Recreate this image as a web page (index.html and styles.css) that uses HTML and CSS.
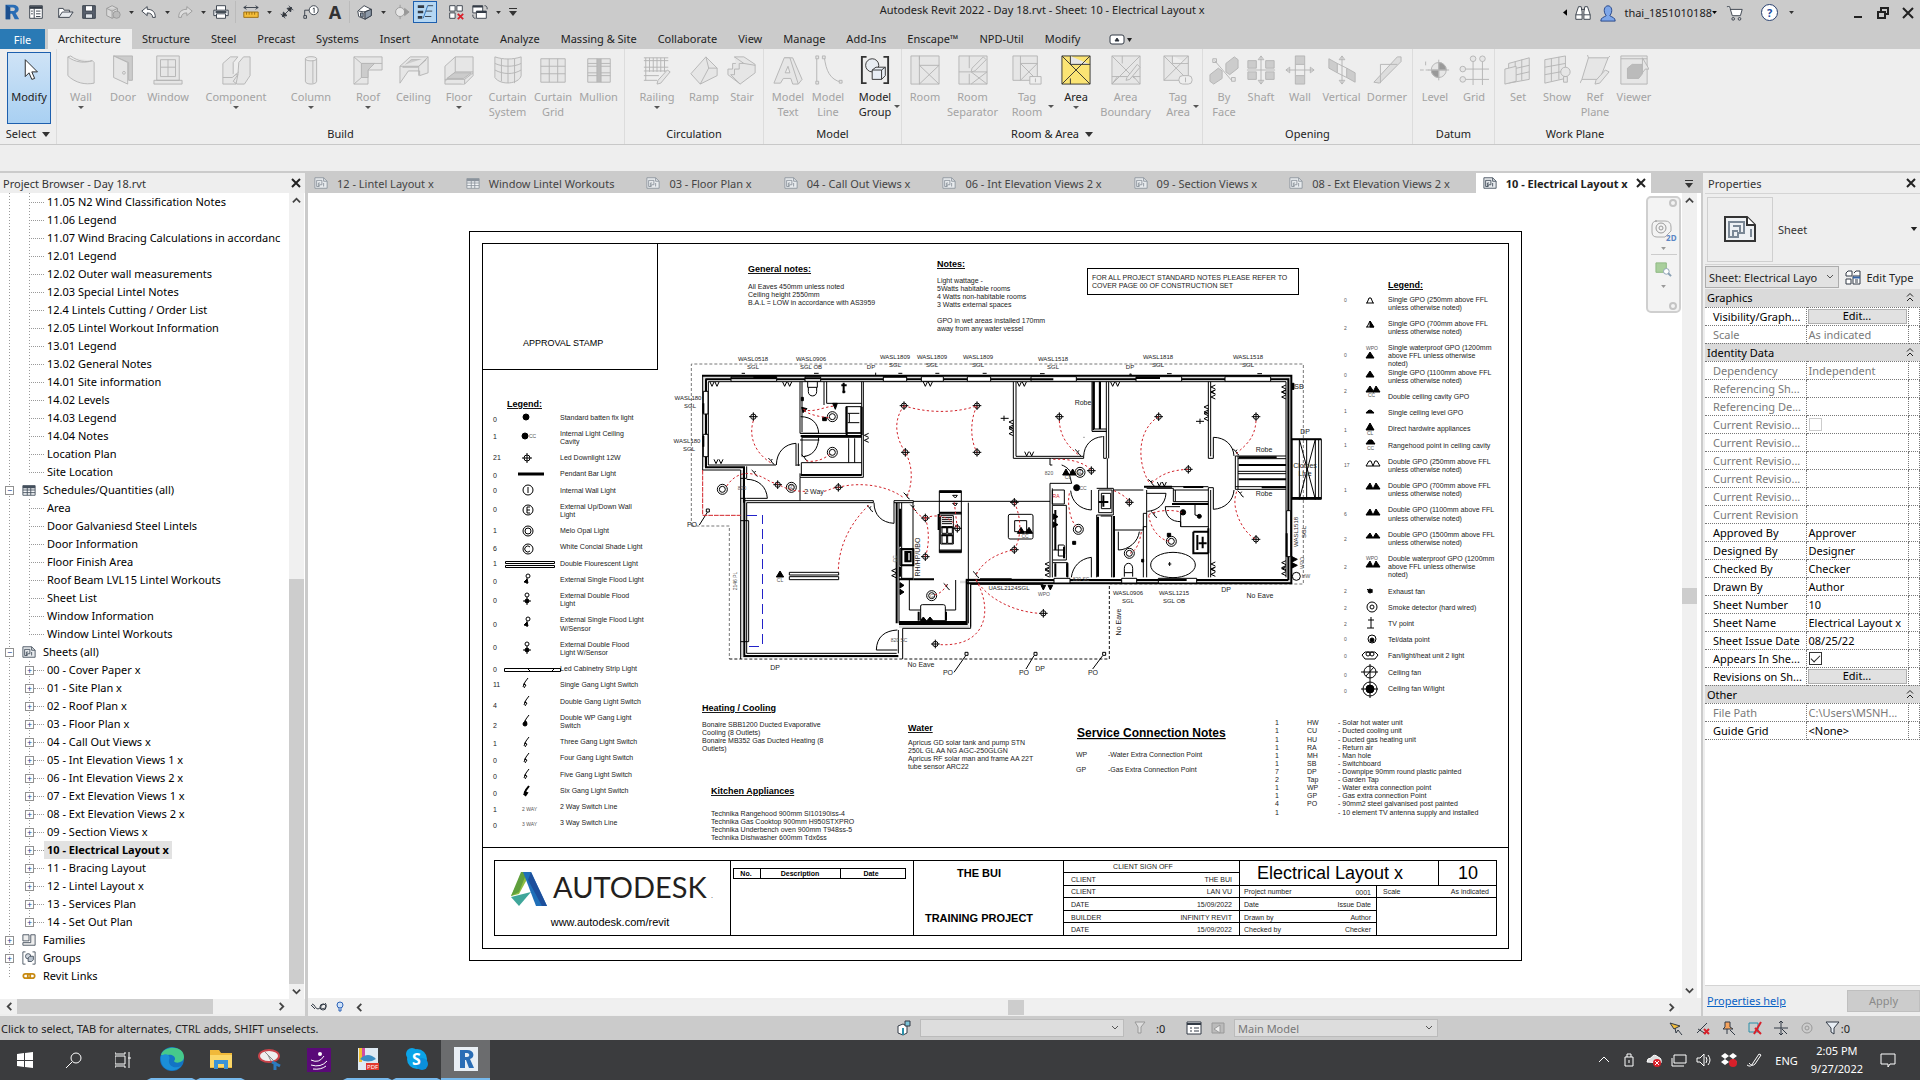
FILE: index.html
```html
<!DOCTYPE html>
<html lang="en">
<head>
    <meta charset="utf-8">
    <title>Autodesk Revit 2022 - Day 18.rvt - Sheet: 10 - Electrical Layout x</title>
    <link rel="stylesheet" href="styles.css">
</head>
<body>
    <svg class="defs" width="0" height="0" aria-hidden="true">
        <symbol id="i-sheet" viewBox="0 0 16 16"><path d="M1 2h10l4 4v8H1z" fill="#e8ebee"/><path d="M11 2v4h4" /><path d="M3 12V5h6v5H6v2zM5 12V8h2M11 8v4"/></symbol>
        <symbol id="i-table" viewBox="0 0 16 16"><path d="M1 3h14v11H1z" fill="#f4f6f8"/><path d="M1 4.500h14" stroke-width="3"/><path d="M1 8h14M1 11h14M6 5v9M10 5v9"/></symbol>
        <symbol id="i-caret" viewBox="0 0 8 5"><path d="M0 0h8L4 5z"/></symbol>
        <symbol id="i-close" viewBox="0 0 10 10"><path d="M1 1l8 8M9 1l-8 8"/></symbol>
        <symbol id="i-up" viewBox="0 0 10 10"><path d="M1 7l4-4 4 4"/></symbol>
        <symbol id="i-down" viewBox="0 0 10 10"><path d="M1 3l4 4 4-4"/></symbol>
        <symbol id="i-left" viewBox="0 0 10 10"><path d="M7 1L3 5l4 4"/></symbol>
        <symbol id="i-right" viewBox="0 0 10 10"><path d="M3 1l4 4-4 4"/></symbol>
        <symbol id="i-fold" viewBox="0 0 8 10"><path d="M1 4.500l3-3 3 3M1 9l3-3 3 3"/></symbol>
    </svg>

    <header class="titlebar">
        <div class="qat">
            <button class="qbtn" aria-label="Revit"><svg viewBox="0 0 20 20"><path d="M3 2h8c8 0 8 8 3 9l4 7h-5l-3-6H8v6H3zM8 5v4h3c3 0 3-4 0-4z" fill="#2a6db5" fill-rule="evenodd"/><path d="M3 2l5 3v13H3z" fill="#1b4f8f"/></svg></button>
            <button class="qbtn" aria-label="Home"><svg class="line" viewBox="0 0 20 20"><path d="M3 3h14v14H3z" fill="#fff"/><path d="M3 5h14" stroke-width="3"/><path d="M8 6v11M10 9h5M10 12h5M10 15h5M4.500 9h2M4.500 12h2"/></svg></button>
            <span class="gap5"></span>
            <button class="qbtn" aria-label="Open"><svg class="line" viewBox="0 0 20 20"><path d="M3 16V6h5l1 2h6v2" fill="#fff"/><path d="M3 16l4-6h12l-4 6z" fill="#e7eaee"/></svg></button>
            <button class="qbtn" aria-label="Save"><svg class="line" viewBox="0 0 20 20"><path d="M3 3h14v14H3z" fill="#59616e"/><path d="M6 3h8v6H6z" fill="#fff"/><path d="M6 12h8v5H6z" fill="#dfe3e8"/></svg></button>
            <button class="qbtn" aria-label="Sync"><svg class="line soft" viewBox="0 0 20 20"><path d="M3 6l6-3 6 3v8l-6 3-6-3zM3 6l6 3 6-3M9 9v8" fill="#d9d9d9"/><circle cx="14" cy="13" r="4" fill="#bbb"/></svg></button>
            <button class="qarr" aria-label="Sync options"><svg><use href="#i-caret"/></svg></button>
            <button class="qbtn" aria-label="Undo"><svg class="line" viewBox="0 0 20 20"><path d="M2 9l6-5v3c6 0 9 3 9 9h-3c0-3-2-5-6-5v3z" fill="#fff"/></svg></button>
            <button class="qarr" aria-label="Undo list"><svg><use href="#i-caret"/></svg></button>
            <button class="qbtn" aria-label="Redo"><svg class="line soft" viewBox="0 0 20 20"><path d="M18 9l-6-5v3c-6 0-9 3-9 9h3c0-3 2-5 6-5v3z" fill="#ddd"/></svg></button>
            <button class="qarr" aria-label="Redo list"><svg><use href="#i-caret"/></svg></button>
            <button class="qbtn" aria-label="Print"><svg class="line" viewBox="0 0 20 20"><path d="M5 8V3h10v5" fill="#fff"/><path d="M2 8h16v6H2z" fill="#eceff2"/><path d="M5 12h10v5H5z" fill="#fff"/><path d="M4 10h12" stroke-width="2"/></svg></button>
            <span class="qsep"></span>
            <button class="qbtn" aria-label="Measure"><svg class="line" viewBox="0 0 20 20"><path d="M2 5h16M2 5l3-2M2 5l3 2M18 5l-3-2M18 5l-3 2"/><path d="M2 10h16v6H2z" fill="#f3bd3a" stroke="#9a6b10"/><path d="M5 10v3M8 10v3M11 10v3M14 10v3" stroke="#9a6b10"/></svg></button>
            <button class="qarr" aria-label="Measure options"><svg><use href="#i-caret"/></svg></button>
            <button class="qbtn" aria-label="Aligned dimension"><svg class="line" viewBox="0 0 20 20"><path d="M5 15L15 5M3 12l5 5M12 3l5 5"/><path d="M5 15l1-5 4 4zM15 5l-1 5-4-4z" fill="#333"/></svg></button>
            <button class="qbtn" aria-label="Tag by category"><svg class="line" viewBox="0 0 20 20"><path d="M2 17h3v-3H2zM3 14v-6h5"/><circle cx="13" cy="8" r="5" fill="#fff"/><path d="M12 6.500l1.500-1V11"/></svg></button>
            <button class="qbtn qtext" aria-label="Text">A</button>
            <span class="qsep"></span>
            <button class="qbtn" aria-label="Default 3D view"><svg class="line" viewBox="0 0 20 20"><path d="M2 9l7-6 8 4v7l-7 4-7-3z" fill="#fff"/><path d="M9 10l8-3M10 10v8M3 9l7 1" /><path d="M5 11h3v5l-3-1zM10 10l7-3v7l-7 4z" fill="#8d9aa9"/></svg></button>
            <button class="qarr" aria-label="3D options"><svg><use href="#i-caret"/></svg></button>
            <button class="qbtn" aria-label="Section"><svg class="line soft" viewBox="0 0 20 20"><circle cx="9" cy="10" r="5" fill="#e6e6e6"/><path d="M9 2v3M9 15v3"/><path d="M14 6l5 4-5 4z" fill="#999"/></svg></button>
            <button class="qbtn qon" aria-label="Thin lines"><svg class="line" viewBox="0 0 20 20"><path d="M2 4h7M2 10h6M2 16h5" stroke-width="3"/><path d="M13 3h6M11 9h7M10 15h7"/><path d="M13 3L8 17" stroke="#2a6db5"/></svg></button>
            <span class="gap7"></span>
            <button class="qbtn" aria-label="Close inactive views"><svg class="line" viewBox="0 0 20 20"><path d="M3 3h6v6H3zM11 3h6v6h-6zM3 11h6v6H3z" fill="#fff"/><path d="M12 12l6 6M18 12l-6 6" stroke="#d8202a" stroke-width="2"/></svg></button>
            <button class="qbtn" aria-label="Switch windows"><svg class="line" viewBox="0 0 20 20"><path d="M2 3h11v8H2z" fill="#fff"/><path d="M6 9h11v8H6z" fill="#fff"/><path d="M2 4h11M6 10h11" stroke-width="2"/><path d="M15 3c2 0 3 1 3 4M2 13c0 3 1 4 3 4"/></svg></button>
            <button class="qarr" aria-label="Window list"><svg><use href="#i-caret"/></svg></button>
            <button class="qarr more" aria-label="Customize toolbar"><svg><use href="#i-caret"/></svg></button>
        </div>
        <h1 class="title">Autodesk Revit 2022 - Day 18.rvt - Sheet: 10 - Electrical Layout x</h1>
        <div class="account">
            <svg class="tri" viewBox="0 0 5 8"><path d="M5 0v8L0 4z"/></svg>
            <svg class="line a16" viewBox="0 0 20 20"><path d="M3 9l2-6h3l1 6v8H2v-5zM17 9l-2-6h-3l-1 6v8h7v-5z" fill="#fff"/><path d="M2 12h7M11 12h7M8 6h4"/></svg>
            <svg class="a16" viewBox="0 0 20 20"><path d="M2 19c0-4 3-4 6-6-4-5-2-11 2-11s6 6 2 11c3 2 6 2 6 6z" fill="#7ea6e8" stroke="#1f3f84"/></svg>
            <button class="user">thai_1851010188<svg><use href="#i-caret"/></svg></button>
            <svg class="line a16 cart" viewBox="0 0 20 20"><path d="M1 3h3l3 10h9l2-7H5" fill="#fff"/><circle cx="8" cy="16.500" r="1.500"/><circle cx="15" cy="16.500" r="1.500"/></svg>
            <button class="help" aria-label="Help">?</button>
            <button class="qarr" aria-label="Help menu"><svg><use href="#i-caret"/></svg></button>
            <div class="winbtns">
                <button aria-label="Minimize"><svg class="win" viewBox="0 0 12 12"><path d="M2 10h8"/></svg></button>
                <button aria-label="Restore"><svg class="win" viewBox="0 0 12 12"><path d="M1 5h7v6H1zM4 4V1h7v6H9"/></svg></button>
                <button aria-label="Close"><svg class="win" viewBox="0 0 12 12"><path d="M1 1l10 10M11 1L1 11"/></svg></button>
            </div>
        </div>
    </header>

    <nav class="tabs">
        <button class="file">File</button>
        <button class="tab active">Architecture</button>
        <button class="tab">Structure</button>
        <button class="tab">Steel</button>
        <button class="tab">Precast</button>
        <button class="tab">Systems</button>
        <button class="tab">Insert</button>
        <button class="tab">Annotate</button>
        <button class="tab">Analyze</button>
        <button class="tab">Massing &amp; Site</button>
        <button class="tab">Collaborate</button>
        <button class="tab">View</button>
        <button class="tab">Manage</button>
        <button class="tab">Add-Ins</button>
        <button class="tab">Enscape™</button>
        <button class="tab">NPD-Util</button>
        <button class="tab">Modify</button>
        <button class="tab collapse" aria-label="Minimize ribbon"><svg class="line" viewBox="0 0 24 12"><rect x="1" y="2" width="14" height="9" rx="2" fill="#fff"/><path d="M6 8l2-3 2 3z" fill="#222"/><path d="M18 5h5l-2.500 4z" fill="#222" stroke="none"/></svg></button>
    </nav>

    <div class="ribbon">
        <section class="panel p-select">
            <div class="tools">
                <button class="tool on"><svg viewBox="0 0 32 32"><path d="M12 5v18l4-4 3 7 3-1-3-7h6z" fill="#fff" stroke="#222"/></svg>Modify</button>
            </div>
            <h2>Select <svg><use href="#i-caret"/></svg></h2>
        </section>
        <section class="panel p-build">
            <div class="tools">
                <button class="tool"><svg viewBox="0 0 32 32"><path d="M2 2c8 6 18 7 26 4l2 2v22c-9 2-20 0-28-8zM2 2l3-1c8 6 16 7 23 5"/></svg>Wall<i></i></button>
                <button class="tool"><svg viewBox="0 0 32 32"><path d="M6 1h20v26h-4V8L6 1z" fill="#ccc"/><path d="M6 1l15 7v23L6 24z"/><circle cx="17" cy="19" r="1.500"/></svg>Door</button>
                <button class="tool"><svg viewBox="0 0 32 32"><path d="M4 1h24v26H4zM8 5h16v18H8zM16 5v18M8 13h16M1 27h30v4H1z"/></svg>Window</button>
                <button class="tool"><svg viewBox="0 0 32 32"><path d="M2 9l8-7h8l-5 6v13h5l-2 10H2zM19 8l5-6h7v20l-6 9h-8l-4-3 5-7z"/><path d="M2 24h10l7-6"/></svg>Component<i></i></button>
                <button class="tool"><svg viewBox="0 0 32 32"><path d="M10 4c0-3 12-3 12 0v24c0 4-12 4-12 0zM10 4c0 3 12 3 12 0M18 6v24"/></svg>Column<i></i></button>
                <button class="tool"><svg viewBox="0 0 32 32"><path d="M1 2h30v14H16v15H1z"/><path d="M1 2l8 7h22M9 9v15l-8 7M9 24l7-8"/><path d="M9 9h14l-7 7v8l-7 0z" fill="#ccc"/></svg>Roof<i></i></button>
                <button class="tool"><svg viewBox="0 0 32 32"><path d="M1 12L12 2h19v17l-9 3v-5H10L1 30z"/><path d="M4 13L13 5h16L20 13z" fill="#ccc"/><path d="M1 12h20l10-10M21 12v10"/></svg>Ceiling</button>
                <button class="tool"><svg viewBox="0 0 32 32"><path d="M1 12L12 2h19v20l-9 9H1z"/><path d="M12 2v16L1 28M12 18h19"/><path d="M3 25l8-6h18l-8 6z" fill="#ccc"/><path d="M1 26h21v5M22 26l9-7"/></svg>Floor<i></i></button>
                <button class="tool"><svg viewBox="0 0 32 32"><path d="M2 2c9 3 19 3 28 0v20c-2 9-22 11-28 2z"/><path d="M2 9c9 4 20 4 28 0M2 16c9 5 20 5 28 0M9 4v24M16 4v26M23 4v26"/></svg>Curtain System</button>
                <button class="tool"><svg viewBox="0 0 32 32"><path d="M3 4h26v25H3zM12 4v25M21 4v25M3 12h26M3 20h26"/></svg>Curtain Grid</button>
                <button class="tool"><svg viewBox="0 0 32 32"><path d="M4 4h10v25H4zM18 4h10v25H18z"/><path d="M14 4h4v25h-4z" fill="#bbb"/><path d="M4 9h10M4 12h10M4 19h10M4 22h10M18 9h10M18 12h10M18 19h10M18 22h10"/></svg>Mullion</button>
            </div>
            <h2>Build</h2>
        </section>
        <section class="panel p-circ">
            <div class="tools">
                <button class="tool"><svg viewBox="0 0 32 32"><path d="M2 3h26M2 6h26M2 13h26M2 17h24M2 22h16M2 27h14M4 3v24M8 3v15M12 3v15M16 3v15M20 3v15M24 3v15"/><path d="M17 27L27 16l3 2-10 12-4 1z"/></svg>Railing<i></i></button>
                <button class="tool"><svg viewBox="0 0 32 32"><path d="M2 20L18 2l12 12v8L12 31z"/><path d="M18 2l3 12-9 17M21 14h9"/></svg>Ramp</button>
                <button class="tool"><svg viewBox="0 0 32 32"><path d="M8 2h10l12 8v9L14 31 1 21v-6h5V9h6z"/><path d="M8 2l10 7h-5v6H8v6H4l10 10M18 9l12 2"/></svg>Stair</button>
            </div>
            <h2>Circulation</h2>
        </section>
        <section class="panel p-model">
            <div class="tools">
                <button class="tool"><svg viewBox="0 0 32 32"><path d="M1 30L12 3h9l10 23-4 5h-6l-2-6h-8l-3 5zM13 19h5l-2-7z" fill-rule="evenodd"/><path d="M12 3h6l9 28"/></svg>Model Text</button>
                <button class="tool"><svg viewBox="0 0 32 32"><path d="M4 3v27M12 2c2 15 6 24 18 27" fill="none"/><path d="M3 1h3v3H3zM3 28h3v3H3zM10 1h3v3h-3zM28 27h3v3h-3z"/></svg>Model Line</button>
                <button class="tool live"><svg viewBox="0 0 32 32"><path d="M7 2H2v28h5M25 2h5v28h-5" fill="none" stroke-width="2"/><circle cx="13" cy="11" r="7" fill="#e9edf2"/><path d="M13 16l4-3h10v9l-4 4H13zM13 16h10v10M23 16l4-3" fill="#e9eef5"/></svg>Model Group<i class="side"></i></button>
            </div>
            <h2>Model</h2>
        </section>
        <section class="panel p-room">
            <div class="tools">
                <button class="tool"><svg viewBox="0 0 32 32"><path d="M1 1h30v30H1zM10 1v30M10 11h21M10 11l21 20M31 11L10 31M10 1v4"/></svg>Room</button>
                <button class="tool"><svg viewBox="0 0 32 32"><path d="M1 1h30v30H1zM12 1v13M1 18h30M14 18l17 13M31 18L14 31M12 20v11"/><path d="M15 14L27 2l3 3-12 12-4 1z"/></svg>Room Separator</button>
                <button class="tool"><svg viewBox="0 0 32 32"><path d="M1 1h26v26H1zM9 1v26M9 9h18M9 9l18 18M27 9L9 27"/><path d="M19 23h12v8H19z" fill="#eee"/><path d="M25 25v4"/></svg><span>Tag<br>Room</span><i class="side"></i></button>
                <button class="tool live"><svg viewBox="0 0 32 32"><path d="M1 1h30v30H1z" fill="#fbe474"/><path d="M10 1v9h21M1 1l30 30M31 1L1 31M10 25v6"/></svg>Area<i></i></button>
                <button class="tool"><svg viewBox="0 0 32 32"><path d="M1 1h30v30H1zM1 1l24 24M31 1L1 31M12 1v8M1 23h30M1 31l6-8M24 23l7 8"/><path d="M17 24L28 10l3 3-11 13-4 1z"/></svg>Area Boundary</button>
                <button class="tool"><svg viewBox="0 0 32 32"><path d="M1 1h26v26H1zM1 1l26 26M27 1L1 27M10 1v8h17"/><rect x="17" y="22" width="14" height="9" rx="4" fill="#eee"/><path d="M24 24v5"/></svg><span>Tag<br>Area</span><i class="side"></i></button>
            </div>
            <h2>Room &amp; Area <svg><use href="#i-caret"/></svg></h2>
        </section>
        <section class="panel p-open">
            <div class="tools">
                <button class="tool"><svg viewBox="0 0 32 32"><path d="M18 9l9-7 4 3v9l-9 7-4-3zM1 21l9-7 4 3v8l-9 6-4-3z" fill="#ccc"/><path d="M6 6l18 21M4 4h4v4H4zM24 24h4v4h-4z"/></svg><span>By<br>Face</span></button>
                <button class="tool"><svg viewBox="0 0 32 32"><path d="M2 6h9v8H2zM21 6h9v8h-9zM2 18h9v8H2zM21 18h9v8h-9z" fill="#ccc"/><path d="M16 1v30M16 1l-3 4h6zM16 31l-3-4h6zM1 16h30"/></svg>Shaft</button>
                <button class="tool"><svg viewBox="0 0 32 32"><path d="M11 1h10v9H11zM11 22h10v9H11z" fill="#ccc"/><path d="M1 16h30M1 16l4-3v6zM31 16l-4-3v6zM11 10v12M21 10v12"/></svg>Wall</button>
                <button class="tool"><svg viewBox="0 0 32 32"><path d="M2 4l9 5v10l-9-5zM21 14l9 5v10l-9-5z" fill="#ccc"/><path d="M16 1v30M16 1l-3 4h6zM16 31l-3-4h6zM11 9l10 5M11 19l10 5"/></svg>Vertical</button>
                <button class="tool"><svg viewBox="0 0 32 32"><path d="M2 29L27 2h4v5L8 30z" fill="#ddd"/><path d="M9 30V10h18" fill="none"/></svg>Dormer</button>
            </div>
            <h2>Opening</h2>
        </section>
        <section class="panel p-datum">
            <div class="tools">
                <button class="tool"><svg viewBox="0 0 32 32"><path d="M0 16h10M6 7v6" stroke-dasharray="4 2"/><circle cx="20" cy="16" r="8"/><path d="M20 8a8 8 0 0 1 8 8h-8zM20 24a8 8 0 0 1-8-8h8z" fill="#999"/><path d="M20 5v22M9 16h22"/></svg>Level</button>
                <button class="tool"><svg viewBox="0 0 32 32"><path d="M15 6v26M25 6v26M6 15h26M6 26h26"/><circle cx="15" cy="4" r="3"/><circle cx="25" cy="4" r="3"/><circle cx="4" cy="15" r="3"/><circle cx="4" cy="26" r="3"/></svg>Grid</button>
            </div>
            <h2>Datum</h2>
        </section>
        <section class="panel p-work">
            <div class="tools">
                <button class="tool"><svg viewBox="0 0 32 32"><path d="M6 9l22-6v23L6 30zM6 16l22-5M6 23l22-5M13 7v22M20 5v22"/><path d="M2 15l12-3v16l-12 3z"/></svg>Set</button>
                <button class="tool"><svg viewBox="0 0 32 32"><path d="M3 5l22-4v24L3 30zM3 13l22-4M3 21l22-4M10 4v24M18 2v24"/><circle cx="25" cy="18" r="5"/><path d="M23 23h4v6h-4z"/></svg>Show</button>
                <button class="tool"><svg viewBox="0 0 32 32"><path d="M9 3h21l-9 23H2zM9 3L8 0M30 3l2-2M2 26l-2 4"/><path d="M17 27l10-11 4 2-10 12-5 1z"/></svg><span>Ref<br>Plane</span></button>
                <button class="tool"><svg viewBox="0 0 32 32"><path d="M2 1h28v30H2zM2 4h28"/><path d="M9 14l5-4h11v10l-4 5H9z" fill="#bbb"/><path d="M25 3v16l3-4h4z"/></svg>Viewer</button>
            </div>
            <h2>Work Plane</h2>
        </section>
    </div>
    <div class="options"></div>

    <main class="work">
        <aside class="browser">
            <header class="phead">Project Browser - Day 18.rvt<button aria-label="Close browser"><svg class="x"><use href="#i-close"/></svg></button></header>
            <div class="bbody">
                <ul class="tree">
                    <li>
                        <ul class="leaves">
                            <li>11.05 N2 Wind Classification Notes</li>
                            <li>11.06 Legend</li>
                            <li>11.07 Wind Bracing Calculations in accordanc</li>
                            <li>12.01 Legend</li>
                            <li>12.02 Outer wall measurements</li>
                            <li>12.03 Special Lintel Notes</li>
                            <li>12.4 Lintels Cutting / Order List</li>
                            <li>12.05 Lintel Workout Information</li>
                            <li>13.01 Legend</li>
                            <li>13.02 General Notes</li>
                            <li>14.01 Site information</li>
                            <li>14.02 Levels</li>
                            <li>14.03 Legend</li>
                            <li>14.04 Notes</li>
                            <li>Location Plan</li>
                            <li>Site Location</li>
                        </ul>
                    </li>
                    <li>
                        <div class="root"><button class="exp">−</button><svg class="ti"><use href="#i-table"/></svg>Schedules/Quantities (all)</div>
                        <ul class="leaves">
                            <li>Area</li>
                            <li>Door Galvaniesd Steel Lintels</li>
                            <li>Door Information</li>
                            <li>Floor Finish Area</li>
                            <li>Roof Beam LVL15 Lintel Workouts</li>
                            <li>Sheet List</li>
                            <li>Window Information</li>
                            <li>Window Lintel Workouts</li>
                        </ul>
                    </li>
                    <li>
                        <div class="root"><button class="exp">−</button><svg class="ti"><use href="#i-sheet"/></svg>Sheets (all)</div>
                        <ul class="leaves sheets">
                            <li><button class="exp">+</button>00 - Cover Paper x</li>
                            <li><button class="exp">+</button>01 - Site Plan x</li>
                            <li><button class="exp">+</button>02 - Roof Plan x</li>
                            <li><button class="exp">+</button>03 - Floor Plan x</li>
                            <li><button class="exp">+</button>04 - Call Out Views x</li>
                            <li><button class="exp">+</button>05 - Int Elevation Views 1 x</li>
                            <li><button class="exp">+</button>06 - Int Elevation Views 2 x</li>
                            <li><button class="exp">+</button>07 - Ext Elevation Views 1 x</li>
                            <li><button class="exp">+</button>08 - Ext Elevation Views 2 x</li>
                            <li><button class="exp">+</button>09 - Section Views x</li>
                            <li><button class="exp">+</button><b>10 - Electrical Layout x</b></li>
                            <li><button class="exp">+</button>11 - Bracing Layout</li>
                            <li><button class="exp">+</button>12 - Lintel Layout x</li>
                            <li><button class="exp">+</button>13 - Services Plan</li>
                            <li><button class="exp">+</button>14 - Set Out Plan</li>
                        </ul>
                    </li>
                    <li><div class="root"><button class="exp">+</button><svg class="ti" viewBox="0 0 16 16"><path d="M1 2h7v7H1zM10 2h5v12H1v-3h9z" fill="#eee"/></svg>Families</div></li>
                    <li><div class="root"><button class="exp">+</button><svg class="ti" viewBox="0 0 16 16"><path d="M4 1H1v14h3M12 1h3v14h-3"/><circle cx="7" cy="6" r="3" fill="#cfd6de"/><path d="M7 8l2-2h4v4l-2 2H7z" fill="#b8c2cd"/></svg>Groups</div></li>
                    <li><div class="root"><span class="noexp"></span><svg class="ti" viewBox="0 0 16 16"><path d="M4 5.500h3a2.500 2.500 0 0 1 0 5H4a2.500 2.500 0 0 1 0-5zM9 5.500h3a2.500 2.500 0 0 1 0 5H9a2.500 2.500 0 0 1 0-5z" fill="none" stroke="#c88a12" stroke-width="2"/></svg>Revit Links</div></li>
                </ul>
                <div class="vbar">
                    <button aria-label="Scroll up"><svg class="ar"><use href="#i-up"/></svg></button>
                    <span class="vthumb b"></span>
                    <button aria-label="Scroll down"><svg class="ar"><use href="#i-down"/></svg></button>
                </div>
            </div>
            <div class="hbar">
                <button aria-label="Scroll left"><svg class="ar"><use href="#i-left"/></svg></button>
                <span class="hthumb b"></span>
                <button aria-label="Scroll right"><svg class="ar"><use href="#i-right"/></svg></button>
            </div>
        </aside>

        <section class="view">
            <div class="vtabs">
                <button class="vtab"><svg><use href="#i-sheet"/></svg>12 - Lintel Layout x</button>
                <button class="vtab"><svg><use href="#i-table"/></svg>Window Lintel Workouts</button>
                <button class="vtab"><svg><use href="#i-sheet"/></svg>03 - Floor Plan x</button>
                <button class="vtab"><svg><use href="#i-sheet"/></svg>04 - Call Out Views x</button>
                <button class="vtab"><svg><use href="#i-sheet"/></svg>06 - Int Elevation Views 2 x</button>
                <button class="vtab"><svg><use href="#i-sheet"/></svg>09 - Section Views x</button>
                <button class="vtab"><svg><use href="#i-sheet"/></svg>08 - Ext Elevation Views 2 x</button>
                <button class="vtab current"><svg><use href="#i-sheet"/></svg>10 - Electrical Layout x<svg class="x"><use href="#i-close"/></svg></button>
                <button class="vmenu more" aria-label="Tab list"><svg><use href="#i-caret"/></svg></button>
            </div>
            <div class="vbody">
                <div class="canvas">
                    <svg class="sheet" viewBox="308 193 1374 805">
                        <defs>
                            <g id="dl"><circle r="8"/><path d="M-13 0H13M0-13V13"/></g>
                            <g id="cl"><circle r="15"/><circle r="9"/></g>
                            <g id="gh"><path d="M0 0l6 13 6-13M15 0l6 13 6-13"/></g>
                            <g id="gv"><path d="M0 0l-13 6 13 6M0 15l-13 6 13 6"/></g>
                            <g id="sw"><path d="M0 0l-5-8 4-5M-5-8l-8-8M0 0l5 3"/></g>
                            <g id="l-sw"><path d="M3-5l-3 4-2 5M-2 1l3 1-2 3"/></g>
                            <g id="l-fl"><circle cx="1" cy="-3" r="2"/><path d="M-3 3l3-3 1 4z" fill="#000"/><path d="M0-1v6"/></g>
                            <g id="l-fd"><circle cy="-4" r="2"/><circle cy="2" r="2" fill="#000"/><path d="M-4 2h8M0-2v8"/></g>
                        </defs>

                        <!-- frame and title block lines -->
                        <g class="ln">
                            <path d="M469.500 231.500h1052v729h-1052zM482.500 243.500h1026v705h-1026zM482.500 369.500h175v-126M482.500 847.500h1026"/>
                            <path d="M494.500 860.500h1002v75h-1002zM730.500 860.500v75M913.500 860.500v75M1063.500 860.500v75M1239.500 860.500v75"/>
                            <path d="M733.500 868.500h172v10h-172zM760.500 868.500v10M840.500 868.500v10"/>
                            <path d="M1063.500 872.500h176M1063.500 885.500h433M1063.500 897.500h433M1063.500 910.500h313M1063.500 922.500h313M1376.500 885.500v50M1438.500 860.500v25"/>
                            <path d="M1087.500 268.500h211v26h-211z"/>
                        </g>

                        <!-- floor plan, drawn at three units to a pixel -->
                        <svg x="680" y="350" width="660" height="330" viewBox="0 0 1980 990" class="plan">
                            <path class="eave" d="M34 528V42H1870V702H1290M34 528H148V927"/>
                            <path class="eave dark" d="M148 927H1288V702"/>
                            <path class="hatch" d="M68 82H1834M1828 82V696M1834 696H840M72 82V352M187 360V922M190 921H655M657 830H868"/>
                            <g class="w">
                                <path class="k" d="M66 77H1834V700H858M76 88H1825V690M78 88V352H192V458"/>
                                <path d="M68 77V360H182V927M85 95H1818V682M85 95V345H288M349 345H360"/>
                                <path class="k" d="M193 445V918H655M650 458V820M657 822H858"/>
                                <path d="M200 458V910H650M200 349V385M182 385H200M182 445H200M190 452H580V458H200M642 452H700V458H642M642 452V520M657 458V820H857M655 910V840M668 927V835H872V703H1090"/>
                                <path class="k" d="M858 690H1825M657 688H700M860 690V825"/>
                                <path d="M865 458V688M857 688H1090M700 454H1110M865 690V820M872 703V830"/>
                                <path d="M182 512H206V875H182M193 512V875"/>
                                <path d="M360 95V250M366 95V246M360 250H545M545 95V375H364V338H545M550 95V382H360V370M360 382V452M365 262H545M506 265V338M524 265V338"/>
                                <path class="k" d="M362 258H545M362 375H545M545 170V255M500 170V255"/>
                                <path d="M432 95V165M440 95V160H545M498 170H543V248H498zM503 190H538M503 218H538M508 190V218"/>
                                <path d="M383 95V112H412V95M385 112V125C385 142 410 142 410 125V112"/>
                                <path class="k" d="M491 98V130M484 106H500M487 125H496"/>
                                <path d="M360 270H418M348 280V348M355 280V348M289 345C290 305 315 282 348 280M362 200C395 200 415 220 416 250H362M416 262C415 300 395 318 368 320M366 320V262"/>
                                <path d="M200 388C235 388 260 410 262 445H200M582 458C582 495 605 518 642 520M589 900C590 860 615 842 652 840M589 900H652"/>
                                <path d="M665 458V688M699 458V685H665M660 596H700V646H660z"/>
                                <path class="k" d="M664 598h36v48h-36zM676 606h16v28h-16zM682 606v28M660 476V590M660 650V680"/>
                                <path d="M778 422H844V608H778zM778 454H844M778 492H844M778 600H844M782 497H820V582H782zM786 503H816M786 509H816M786 515H816M786 521H816M786 530H800V550H786zM803 530H817V550H803zM786 555H800V580H786zM803 555H817V580H803z"/>
                                <path class="k" d="M778 426H844M778 488H844M778 604H844M776 492V540M784 532H818M784 556H818"/>
                                <path d="M818 436h14l-6 8zM818 460h14l-6 8zM688 690V780H722M827 690V780H795M722 812V768Q722 764 727 764H790Q796 764 796 770V812z"/>
                                <path class="k" d="M657 816H858M716 785V812M798 785V812M700 688H762"/>
                                <path d="M985 498Q985 493 990 493H1054Q1059 493 1059 498V562Q1059 567 1054 567H990Q985 567 985 562zM1004 512H1040V545H1004z"/>
                                <path d="M328 667H476V675H328zM328 680H476V689H328z"/>
                                <!-- bedrooms -->
                                <path d="M1000 95V325H1115M1008 95V319H1211M1110 325V345H1117M1211 319V325H1115"/>
                                <path d="M1236 95V244H1278M1243 95V237H1279M1279 95V325H1271V258M1286 95V325M1236 244H1280M1258 95V237M1282 325V415"/>
                                <path class="k" d="M1240 95V240M1260 95V237"/>
                                <path d="M1585 95V325H1600V317M1592 95V319M1600 319V262M1600 262C1635 262 1660 285 1662 318M1585 682V413H1600V478M1592 420V682M1600 478C1635 476 1660 452 1662 420M1666 318V418M1674 318V418M1666 318H1818M1674 326H1818M1674 364H1818M1674 371H1818M1666 410H1818M1666 418H1818"/>
                                <path class="k" d="M1676 345H1818M1676 388H1818M1676 322H1790M1745 412H1818"/>
                                <path d="M1211 319C1212 285 1235 262 1268 260M1213 262H1211"/>
                                <!-- wet areas -->
                                <path d="M1110 400H1175L1168 372M1110 400V682M1117 415V682M1117 420H1153V462H1117zM1119 466H1159V630H1119M1119 638H1163V682M1160 640V680M1145 345C1160 350 1172 362 1176 375"/>
                                <path class="k" d="M1126 480V600M1126 640V680M1162 640V682M1152 590V625"/>
                                <path d="M1135 585H1150Q1154 585 1154 590V612Q1154 618 1148 618H1135zM1120 600H1150"/>
                                <path d="M1250 415H1300V495H1250V682M1256 420H1296V488H1256zM1264 430H1292V476H1264zM1262 498H1295V682M1300 420H1390M1300 498V682M1234 420V480M1172 422C1175 455 1200 478 1234 480M1234 682V622C1200 626 1178 650 1174 682M1300 540H1390M1315 545V600C1345 600 1375 575 1378 545M1390 682V490H1400M1400 415H1480M1400 420V682M1390 540V530H1400"/>
                                <path class="k" d="M1270 436V470M1256 456H1285M1254 500V680M1302 498V682M1392 410H1476M1452 600"/>
                                <path d="M1400 430H1458C1456 465 1430 482 1402 484M1480 415V455H1585M1480 420H1585M1486 455V420M1392 410H1585M1456 470H1500M1456 470C1456 500 1475 515 1502 515V530H1585M1502 490V530"/>
                                <path class="k" d="M1510 411H1570M1476 462H1585M1585 535V610M1540 545H1585M1540 545V610H1585M1552 555V600M1568 560V595M1556 580H1580"/>
                                <ellipse cx="1479" cy="645" rx="67" ry="38"/>
                                <path d="M1464 642h10M1469 636v12M1333 680V655C1333 635 1358 635 1358 655V680M1333 668H1358M1545 465V495L1558 498"/>
                                <!-- clothes line -->
                                <path d="M1836 268H1924V448H1836zM1858 268V448M1880 268V448M1906 268V448M1916 268V448M1858 268L1906 448M1906 268L1858 448"/>
                                <path class="k" d="M1836 268H1924M1836 444H1924"/>
                                <!-- posts and leaders -->
                                <path d="M58 525L82 487M79 477h9v9h-9zM822 967L857 917M855 907h9v9h-9zM1038 957L1062 917M1062 907h9v9h-9zM1238 957L1268 917M1268 907h9v9h-9z"/>
                            </g>
                            <g class="win">
                                <path d="M153 80H290V94H153zM375 80H422V94H375zM610 80H680V94H610zM724 80H790V94H724zM862 80H932V94H862zM1053 80H1189V94H1053zM1368 80H1505V94H1368zM1635 80H1772V94H1635zM70 124H84V192H70zM70 253H84V320H70zM1122 685H1170V699H1122zM1325 685H1370V699H1325zM1435 685H1550V699H1435zM1820 482H1832V620H1820z"/>
                                <path class="k" d="M153 85H290M220 80H290M375 85H422M610 80H680M1053 88H1120M1368 84H1440M900 688H995M1435 690H1520M70 160V190M70 258V290M1820 550V620"/>
                                <path d="M185 70h10M402 70h14M655 70h12M766 70h12M908 70h12M1080 71h14M1461 71h14M1732 71h14M587 68v8M1352 76l-3-4 5 0z"/>
                            </g>
                            <g class="sym">
                                <use href="#dl" x="220" y="200"/><use href="#dl" x="293" y="404"/><use href="#dl" x="475" y="412"/>
                                <use href="#dl" x="672" y="167"/><use href="#dl" x="891" y="167"/><use href="#dl" x="676" y="307"/><use href="#dl" x="891" y="307"/>
                                <use href="#dl" x="736" y="504"/><use href="#dl" x="736" y="620"/><use href="#dl" x="832" y="535"/><use href="#dl" x="1003" y="457"/>
                                <use href="#dl" x="1003" y="599"/><use href="#dl" x="766" y="882"/><use href="#dl" x="1138" y="200"/><use href="#dl" x="1436" y="200"/>
                                <use href="#dl" x="1728" y="200"/><use href="#dl" x="1234" y="362"/><use href="#dl" x="1525" y="358"/><use href="#dl" x="1348" y="457"/>
                                <use href="#dl" x="1728" y="568"/><use href="#dl" x="1090" y="790"/>
                                <use href="#cl" x="457" y="200"/><use href="#cl" x="457" y="307"/><use href="#cl" x="127" y="418"/><use href="#cl" x="334" y="412"/>
                                <use href="#cl" x="755" y="737"/><use href="#cl" x="1200" y="367"/><use href="#cl" x="1195" y="538"/><use href="#cl" x="1348" y="610"/><use href="#cl" x="1474" y="574"/>
                                <use href="#gh" x="90" y="96"/><use href="#gh" x="308" y="96"/><use href="#gh" x="102" y="328"/><use href="#gh" x="730" y="96"/>
                                <use href="#gh" x="1012" y="96"/><use href="#gh" x="1292" y="96"/><use href="#gh" x="1034" y="305"/><use href="#gh" x="1432" y="396"/>
                                <use href="#gv" x="566" y="250"/><use href="#gv" x="1000" y="210"/><use href="#gv" x="1000" y="230"/><use href="#gv" x="1585" y="165"/><use href="#gv" x="1585" y="185"/>
                                <use href="#gv" x="1606" y="105"/><use href="#gv" x="1606" y="120"/><use href="#gv" x="1818" y="105"/><use href="#gv" x="1818" y="120"/><use href="#gv" x="1606" y="636"/><use href="#gv" x="1606" y="652"/>
                                <use href="#gv" x="1818" y="632"/><use href="#gv" x="1818" y="650"/><use href="#gv" x="1108" y="636"/><use href="#gv" x="1108" y="654"/><use href="#gv" x="648" y="656"/>
                                <use href="#sw" x="278" y="340"/><use href="#sw" x="378" y="330"/><use href="#sw" x="228" y="376"/><use href="#sw" x="574" y="482"/><use href="#sw" x="684" y="444"/><use href="#sw" x="704" y="480"/>
                                <use href="#sw" x="804" y="716"/><use href="#sw" x="892" y="680"/><use href="#sw" x="1198" y="314"/><use href="#sw" x="1418" y="404"/><use href="#sw" x="1672" y="312"/><use href="#sw" x="1686" y="438"/><use href="#sw" x="1426" y="500"/>
                                <path d="M962 205h24M972 197v16M1548 214h24M1560 206v16"/>
                                <g class="fill">
                                    <path d="M300 663l11 18h-22zM1012 550l11-18 11 18zM1036 550l11-18 11 18zM1148 375l10-18 10 18zM1168 375l10-18 10 18zM1083 706h14l-7 14zM1104 706h14l-7 14z"/>
                                    <path d="M660 698l12 8-12 8zM660 718l12 8-12 8zM722 811l8-10 8 10zM742 811l8-10 8 10zM1836 620l16 8-16 8zM1836 638l16 8-16 8zM1120 492l14 8-14 8zM1120 516l14 8-14 8zM365 172l16 4-12 12zM458 160h14l-6 18z"/>
                                    <circle cx="1190" cy="413" r="9"/><circle cx="1509" cy="487" r="8"/><circle cx="1558" cy="499" r="6"/>
                                    <path d="M428 202h11v10h-11zM1178 574h9v9h-9zM1462 550h10v10h-10zM1836 100h6v18h-6zM1385 628h6v8h-6zM364 142h6v10h-6z"/>
                                </g>
                                <circle cx="1849" cy="679" r="12"/>
                            </g>
                            <g class="wire">
                                <path d="M220 212C205 260 225 310 275 340M378 332C400 338 430 330 450 312M370 178C400 190 430 170 465 168M372 182C400 200 430 200 450 204M140 408C165 372 195 365 225 374C255 380 270 400 290 400C320 420 350 425 385 424M432 424C450 420 460 412 475 412C540 395 620 405 672 444"/>
                                <path d="M672 167C640 210 645 260 676 307C700 350 698 400 680 444M672 167C740 190 830 190 891 167C870 210 870 270 891 307M566 466C510 520 475 590 475 665M700 474C710 490 720 500 736 504M736 504C748 540 748 585 736 620M736 504C770 490 815 500 832 535L822 450M1003 457C1025 505 1025 560 1003 599C950 610 905 635 886 680"/>
                                <path d="M764 735C780 730 795 720 800 700M888 688C920 745 1000 785 1078 790M888 690C940 780 920 890 782 884M1138 212C1140 260 1165 290 1195 314M1120 328C1160 325 1215 335 1234 362M1436 200C1370 240 1370 340 1410 402M1525 358C1470 360 1440 375 1414 400M1728 212C1725 270 1690 290 1668 312"/>
                                <path d="M1670 425C1650 475 1690 550 1728 568M1168 430C1160 470 1175 520 1190 530M1302 422C1320 430 1340 440 1348 457M1384 546C1378 580 1370 600 1350 610M1406 494C1430 480 1480 478 1505 487M1406 496C1415 550 1450 575 1474 574"/>
                                <path class="red" d="M68 360V496H182"/>
                            </g>
                            <path class="blue" d="M200 495H247V888H200"/>
                        </svg>

                        <!-- notes -->
                        <g class="t h">
                            <text x="748" y="272">General notes:</text>
                            <text x="937" y="267">Notes:</text>
                            <text x="507" y="407">Legend:</text>
                            <text x="1388" y="288">Legend:</text>
                            <text x="702" y="711">Heating / Cooling</text>
                            <text x="908" y="731">Water</text>
                            <text x="711" y="794">Kitchen Appliances</text>
                            <text class="big" x="1077" y="737">Service Connection Notes</text>
                        </g>
                        <g class="t">
                            <text x="748" y="289">All Eaves 450mm unless noted</text>
                            <text x="748" y="297">Ceiling height 2550mm</text>
                            <text x="748" y="305">B.A.L = LOW in accordance with AS3959</text>
                            <text x="937" y="283">Light wattage -</text>
                            <text x="937" y="291">5Watts habitable rooms</text>
                            <text x="937" y="299">4 Watts non-habitable rooms</text>
                            <text x="937" y="307">3 Watts external spaces</text>
                            <text x="937" y="323">GPO in wet areas installed 170mm</text>
                            <text x="937" y="331">away from any water vessel</text>
                            <text x="1092" y="280">FOR ALL PROJECT STANDARD NOTES PLEASE REFER TO</text>
                            <text x="1092" y="288">COVER PAGE 00 OF CONSTRUCTION SET</text>
                            <text class="stamp" x="523" y="346">APPROVAL STAMP</text>
                            <text x="702" y="727">Bonaire SBB1200 Ducted Evaporative</text>
                            <text x="702" y="735">Cooling (8 Outlets)</text>
                            <text x="702" y="743">Bonaire MB352 Gas Ducted Heating (8</text>
                            <text x="702" y="751">Outlets)</text>
                            <text x="908" y="745">Apricus GD solar tank and pump STN</text>
                            <text x="908" y="753">250L GL AA NG AGC-250GLGN</text>
                            <text x="908" y="761">Apricus RF solar man and frame AA 22T</text>
                            <text x="908" y="769">tube sensor ARC22</text>
                            <text x="711" y="816">Technika Rangehood 900mm SI10190iss-4</text>
                            <text x="711" y="824">Technika Gas Cooktop 900mm H950STXPRO</text>
                            <text x="711" y="832">Technika Underbench oven 900mm T948ss-5</text>
                            <text x="711" y="840">Technika Dishwasher 600mm Tdx6ss</text>
                            <text x="1076" y="757">WP</text><text x="1108" y="757">-Water Extra Connection Point</text>
                            <text x="1076" y="772">GP</text><text x="1108" y="772">-Gas Extra Connection Point</text>
                        </g>

                        <!-- service list -->
                        <g class="t">
                            <text x="1275" y="725">1</text><text x="1307" y="725">HW</text><text x="1338" y="725">- Solar hot water unit</text>
                            <text x="1275" y="733">1</text><text x="1307" y="733">CU</text><text x="1338" y="733">- Ducted cooling unit</text>
                            <text x="1275" y="742">1</text><text x="1307" y="742">HU</text><text x="1338" y="742">- Ducted gas heating unit</text>
                            <text x="1275" y="750">1</text><text x="1307" y="750">RA</text><text x="1338" y="750">- Return air</text>
                            <text x="1275" y="758">1</text><text x="1307" y="758">MH</text><text x="1338" y="758">- Man hole</text>
                            <text x="1275" y="766">1</text><text x="1307" y="766">SB</text><text x="1338" y="766">- Switchboard</text>
                            <text x="1275" y="774">7</text><text x="1307" y="774">DP</text><text x="1338" y="774">- Downpipe 90mm round plastic painted</text>
                            <text x="1275" y="782">2</text><text x="1307" y="782">Tap</text><text x="1338" y="782">- Garden Tap</text>
                            <text x="1275" y="790">1</text><text x="1307" y="790">WP</text><text x="1338" y="790">- Water extra connection point</text>
                            <text x="1275" y="798">1</text><text x="1307" y="798">GP</text><text x="1338" y="798">- Gas extra connection Point</text>
                            <text x="1275" y="806">4</text><text x="1307" y="806">PO</text><text x="1338" y="806">- 90mm2 steel galvanised post painted</text>
                            <text x="1275" y="815">1</text><text x="1338" y="815">- 10 element TV antenna supply and installed</text>
                        </g>

                        <!-- left legend -->
                        <g class="t">
                            <text x="493" y="422">0</text><text x="560" y="420">Standard batten fix light</text>
                            <text x="493" y="439">1</text><text x="560" y="436">Internal Light Ceiling</text><text x="560" y="444">Cavity</text>
                            <text x="493" y="460">21</text><text x="560" y="460">Led Downlight 12W</text>
                            <text x="493" y="478">0</text><text x="560" y="476">Pendant Bar Light</text>
                            <text x="493" y="493">0</text><text x="560" y="493">Internal Wall Light</text>
                            <text x="493" y="512">0</text><text x="560" y="509">External Up/Down Wall</text><text x="560" y="517">Light</text>
                            <text x="493" y="533">1</text><text x="560" y="533">Melo Opal Light</text>
                            <text x="493" y="551">6</text><text x="560" y="549">White Concial Shade Light</text>
                            <text x="493" y="566">1</text><text x="560" y="566">Double Flourescent Light</text>
                            <text x="493" y="584">0</text><text x="560" y="582">External Single Flood Light</text>
                            <text x="493" y="603">0</text><text x="560" y="598">External Double Flood</text><text x="560" y="606">Light</text>
                            <text x="493" y="627">0</text><text x="560" y="622">External Single Flood Light</text><text x="560" y="631">W/Sensor</text>
                            <text x="493" y="650">0</text><text x="560" y="647">External Double Flood</text><text x="560" y="655">Light W/Sensor</text>
                            <text x="493" y="672">0</text><text x="560" y="671">Led Cabinetry Strip Light</text>
                            <text x="493" y="687">11</text><text x="560" y="687">Single Gang Light Switch</text>
                            <text x="493" y="708">4</text><text x="560" y="704">Double Gang Light Switch</text>
                            <text x="493" y="728">2</text><text x="560" y="720">Double WP Gang Light</text><text x="560" y="728">Switch</text>
                            <text x="493" y="746">1</text><text x="560" y="744">Three Gang Light Switch</text>
                            <text x="493" y="763">0</text><text x="560" y="760">Four Gang Light Switch</text>
                            <text x="493" y="779">0</text><text x="560" y="777">Five Gang Light Switch</text>
                            <text x="493" y="796">0</text><text x="560" y="793">Six Gang Light Switch</text>
                            <text x="493" y="812">1</text><text x="560" y="809">2 Way Switch Line</text>
                            <text x="493" y="828">0</text><text x="560" y="825">3 Way Switch Line</text>
                            <text class="xs" x="522" y="811">2 WAY</text><text class="xs" x="522" y="826">3 WAY</text>
                            <text class="xs" x="529" y="438">CC</text>
                        </g>
                        <g class="li">
                            <circle cx="526" cy="417" r="3" fill="#000"/><circle cx="525" cy="436" r="3" fill="#000"/>
                            <circle cx="527" cy="458" r="3"/><path d="M522 458h10M527 453v10"/>
                            <path d="M518 474h26" stroke-width="3"/>
                            <circle cx="528" cy="490" r="5"/><path d="M528 487v6"/>
                            <circle cx="528" cy="510" r="5"/><path d="M530 507h-3v6h3M527 510h3"/>
                            <circle cx="528" cy="531" r="5"/><circle cx="528" cy="531" r="3"/>
                            <circle cx="528" cy="549" r="5"/><path d="M530 547a3 3 0 1 0 0 4"/>
                            <path d="M505.500 561.500h49v2h-49zM505.500 565.500h49v2h-49z"/>
                            <use href="#l-fl" x="527" y="579"/><use href="#l-fd" x="527" y="599"/><use href="#l-fl" x="527" y="622"/><use href="#l-fd" x="527" y="648"/>
                            <path d="M504.500 668.500h56v3h-56zM527 668l3 3M552 671l3-3"/>
                            <use href="#l-sw" x="525" y="683"/><use href="#l-sw" x="526" y="701"/><use href="#l-sw" x="526" y="720"/><circle cx="525" cy="724" r="2" fill="#000"/>
                            <use href="#l-sw" x="526" y="742"/><use href="#l-sw" x="526" y="758"/><use href="#l-sw" x="526" y="774"/><use href="#l-sw" x="526" y="791" stroke-width="2"/>
                        </g>

                        <!-- right legend -->
                        <g class="t">
                            <text x="1388" y="302">Single GPO (250mm above FFL</text><text x="1388" y="310">unless otherwise noted)</text>
                            <text x="1388" y="326">Single GPO (700mm above FFL</text><text x="1388" y="334">unless otherwise noted)</text>
                            <text x="1388" y="350">Single waterproof GPO (1200mm</text><text x="1388" y="358">above FFL unless otherwise</text><text x="1388" y="366">noted)</text>
                            <text x="1388" y="375">Single GPO (1100mm above FFL</text><text x="1388" y="383">unless otherwise noted)</text>
                            <text x="1388" y="399">Double ceiling cavity GPO</text>
                            <text x="1388" y="415">Single ceiling level GPO</text>
                            <text x="1388" y="431">Direct hardwire appliances</text>
                            <text x="1388" y="448">Rangehood point in ceiling cavity</text>
                            <text x="1388" y="464">Double GPO (250mm above FFL</text><text x="1388" y="472">unless otherwise noted)</text>
                            <text x="1388" y="488">Double GPO (700mm above FFL</text><text x="1388" y="496">unless otherwise noted)</text>
                            <text x="1388" y="512">Double GPO (1100mm above FFL</text><text x="1388" y="521">unless otherwise noted)</text>
                            <text x="1388" y="537">Double GPO (1500mm above FFL</text><text x="1388" y="545">unless otherwise noted)</text>
                            <text x="1388" y="561">Double waterproof GPO (1200mm</text><text x="1388" y="569">above FFL unless otherwise</text><text x="1388" y="577">noted)</text>
                            <text x="1388" y="594">Exhaust fan</text>
                            <text x="1388" y="610">Smoke detector (hard wired)</text>
                            <text x="1388" y="626">TV point</text>
                            <text x="1388" y="642">Tel/data point</text>
                            <text x="1388" y="658">Fan/light/heat unit 2 light</text>
                            <text x="1388" y="675">Ceiling fan</text>
                            <text x="1388" y="691">Ceiling fan W/light</text>
                        </g>
                        <g class="t xs">
                            <text x="1344" y="302">0</text><text x="1344" y="330">2</text><text x="1344" y="357">0</text><text x="1344" y="377">0</text><text x="1344" y="393">2</text>
                            <text x="1344" y="413">1</text><text x="1344" y="432">1</text><text x="1344" y="447">1</text><text x="1344" y="467">17</text><text x="1344" y="492">1</text>
                            <text x="1344" y="516">6</text><text x="1344" y="541">2</text><text x="1344" y="569">2</text><text x="1344" y="593">2</text><text x="1344" y="610">2</text>
                            <text x="1344" y="626">2</text><text x="1344" y="641">0</text><text x="1344" y="658">0</text><text x="1344" y="677">0</text><text x="1344" y="693">0</text>
                            <text x="1366" y="350">WPO</text><text x="1366" y="560">WPO</text><text x="1368" y="397">CC</text><text x="1367" y="435">CL</text><text x="1367" y="450">CC</text>
                        </g>
                        <g class="li">
                            <path d="M1366 303h8M1367 303l2-5h2l2 5M1366 327h8M1367 327l3-6 3 6"/>
                            <path d="M1370 321l4 6h-4zM1366 358l4-6 4 6zM1366 377l4-6 4 6zM1366 392l4-6 4 6zM1373 392l3-6 4 6zM1366 413q4-6 8 0zM1366 430l4-7 4 7zM1366 444l3-4h3l3 4z" fill="#000"/>
                            <path d="M1366 466l3-5h2l2 5zM1373 466l2-5h2l3 5z"/>
                            <path d="M1366 489l4-6 3 6zM1373 489l3-6 4 6zM1366 515l4-6 3 6zM1373 515l3-6 4 6zM1366 538l4-5 3 5zM1373 538l3-5 4 5zM1366 567l4-6 3 6zM1373 567l3-6 4 6z" fill="#000"/>
                            <circle cx="1370" cy="591" r="2" fill="#000"/><path d="M1367 589l2 2M1372 589v4"/>
                            <circle cx="1372" cy="607" r="5"/><circle cx="1372" cy="607" r="2"/>
                            <path d="M1371 617v11M1368 620h6M1367 628h7"/>
                            <circle cx="1372" cy="639" r="4"/><circle cx="1372" cy="640" r="2" fill="#000"/>
                            <path d="M1362 655l3-3h10l3 3-3 4h-10z"/><circle cx="1368" cy="654" r="2"/><circle cx="1372" cy="654" r="2"/>
                            <circle cx="1370" cy="672" r="6"/><path d="M1361 672h17M1370 664v17M1366 676l8-9"/>
                            <circle cx="1370" cy="689" r="7"/><circle cx="1370" cy="689" r="4" fill="#000"/><path d="M1361 689h17M1370 681v17"/>
                        </g>

                        <!-- plan labels -->
                        <g class="t s mid">
                            <text x="753" y="361">WASL0518</text><text x="753" y="369">SGL</text>
                            <text x="811" y="361">WASL0906</text><text x="811" y="369">SGL OB</text>
                            <text x="871" y="369">DP</text>
                            <text x="895" y="359">WASL1809</text><text x="895" y="367">SGL</text>
                            <text x="932" y="359">WASL1809</text><text x="932" y="367">SGL</text>
                            <text x="978" y="359">WASL1809</text><text x="978" y="367">SGL</text>
                            <text x="1053" y="361">WASL1518</text><text x="1053" y="369">SGL</text>
                            <text x="1130" y="369">DP</text>
                            <text x="1158" y="359">WASL1818</text><text x="1158" y="367">SGL</text>
                            <text x="1248" y="359">WASL1518</text><text x="1248" y="367">SGL</text>
                            <text x="688" y="400">WASL180</text><text x="690" y="408">SGL</text>
                            <text x="687" y="443">WASL180</text><text x="689" y="451">SGL</text>
                            <text x="1009" y="590">UASL2124SGL</text>
                            <text x="1128" y="595">WASL0906</text><text x="1128" y="603">SGL</text>
                            <text x="1174" y="595">WASL1215</text><text x="1174" y="603">SGL OB</text>
                            <text transform="translate(1298 532) rotate(-90)">WASL1518</text><text transform="translate(1306 532) rotate(-90)">SGL</text>
                        </g>
                        <g class="t mid">
                            <text x="692" y="527">PO</text><text x="775" y="670">DP</text><text x="921" y="667">No Eave</text><text x="948" y="675">PO</text><text x="1024" y="675">PO</text>
                            <text x="1040" y="671">DP</text><text x="1093" y="675">PO</text><text x="814" y="494">2 Way</text><text x="1083" y="405">Robe</text><text x="1264" y="452">Robe</text><text x="1264" y="496">Robe</text>
                            <text x="1305" y="468">Clothes</text><text x="1305" y="476">Line</text><text x="1305" y="434">DP</text><text x="1299" y="389">SB</text><text x="1226" y="592">DP</text><text x="1260" y="598">No Eave</text>
                            <text transform="translate(1121 622) rotate(-90)">No Eave</text><text transform="translate(920 557) rotate(-90)">RH/HP/UBO</text>
                        </g>
                        <g class="t xs mid">
                            <text x="1044" y="596">WPO</text><text x="742" y="490">820</text><text x="899" y="642">820 SC</text><text x="780" y="582">CL</text><text x="1049" y="475">820</text>
                            <text x="1083" y="490">CC</text><text x="1025" y="538">CC</text><text x="1068" y="479">CL</text><text x="1080" y="474">SD</text><text x="791" y="489">SD</text><text x="932" y="598">G</text><text x="1306" y="578">HW</text>
                            <text class="ra" x="1056" y="498">RA</text><text x="1081" y="581">820 SC</text>
                            <text transform="translate(737 581) rotate(-90)">2146 PL</text><text transform="translate(897 559) rotate(-90)">CC</text><text transform="translate(1304 563) rotate(-90)">WPO</text>
                        </g>

                        <!-- title block -->
                        <path d="M511 896l12-24h8l-12 22z" fill="#8fbf45"/>
                        <path d="M511 896l10-24h6l-8 20z" fill="#5f9f3c"/>
                        <path d="M511 897l20-5-12 14z" fill="#3fa69a"/>
                        <path d="M523 872h8l16 34h-11z" fill="#1f6fb8"/>
                        <path d="M531 872l16 34h-5l-14-26z" fill="#1d4f9c"/>
                        <text class="brand" x="553" y="898">AUTODESK</text><text class="t" x="711" y="898">.</text>
                        <text class="t mid url" x="610" y="926">www.autodesk.com/revit</text>
                        <g class="t mid rev"><text x="746" y="876">No.</text><text x="800" y="876">Description</text><text x="871" y="876">Date</text></g>
                        <g class="t mid proj"><text x="979" y="877">THE BUI</text><text x="979" y="922">TRAINING PROJECT</text></g>
                        <g class="t">
                            <text class="mid" x="1143" y="869">CLIENT SIGN OFF</text>
                            <text x="1071" y="882">CLIENT</text><text x="1071" y="894">CLIENT</text><text x="1071" y="907">DATE</text><text x="1071" y="920">BUILDER</text><text x="1071" y="932">DATE</text>
                            <text x="1244" y="894">Project number</text><text x="1244" y="907">Date</text><text x="1244" y="920">Drawn by</text><text x="1244" y="932">Checked by</text><text x="1383" y="894">Scale</text>
                        </g>
                        <g class="t end">
                            <text x="1232" y="882">THE BUI</text><text x="1232" y="894">LAN VU</text><text x="1232" y="907">15/09/2022</text><text x="1232" y="920">INFINITY REVIT</text><text x="1232" y="932">15/09/2022</text>
                            <text x="1371" y="895">0001</text><text x="1371" y="907">Issue Date</text><text x="1371" y="920">Author</text><text x="1371" y="932">Checker</text><text x="1489" y="894">As indicated</text>
                        </g>
                        <text class="t name" x="1257" y="879">Electrical Layout x</text>
                        <text class="t name mid" x="1468" y="879">10</text>
                    </svg>
                    <div class="navbar">
                        <button class="dot" aria-label="Close navigation bar"></button>
                        <button aria-label="Steering wheel"><svg class="wheel" viewBox="0 0 26 22"><path d="M4 3h10q6 0 6 6v4l-6 6H6q-5 0-5-5V8q0-5 5-5z" fill="#f3f3f3" stroke="#aaa"/><circle cx="10" cy="10" r="5" fill="none" stroke="#999"/><circle cx="10" cy="10" r="2" fill="none" stroke="#999"/></svg><b>2D</b></button>
                        <svg class="ncar"><use href="#i-caret"/></svg>
                        <hr>
                        <button aria-label="Zoom region"><svg class="zoomr" viewBox="0 0 18 18"><path d="M1 2h11v10H1z" fill="#a9cf9c" stroke="#8db882"/><circle cx="12" cy="11" r="3" fill="#fff" stroke="#8aa0b4"/><path d="M14 13l3 3" stroke="#8aa0b4" stroke-width="2"/></svg></button>
                        <svg class="ncar"><use href="#i-caret"/></svg>
                        <button class="dot end" aria-label="Navigation bar options"></button>
                    </div>
                </div>
                <div class="vbar">
                    <button aria-label="Scroll up"><svg class="ar"><use href="#i-up"/></svg></button>
                    <span class="vthumb v"></span>
                    <button aria-label="Scroll down"><svg class="ar"><use href="#i-down"/></svg></button>
                </div>
            </div>
            <div class="vfoot">
                <button aria-label="Temporary hide"><svg class="line" viewBox="0 0 16 12"><path d="M0 4l4 4M1 3c3 0 3 5 6 5s3-5 6-5M14 2c3 3 0 7-4 5"/><circle cx="12" cy="6" r="3"/></svg></button>
                <button aria-label="Reveal hidden"><svg class="bulb" viewBox="0 0 10 12"><circle cx="5" cy="4" r="3"/><path d="M4 7v3h2V7"/></svg></button>
                <div class="hbar">
                    <button aria-label="Scroll left"><svg class="ar"><use href="#i-left"/></svg></button>
                    <span class="hthumb v"></span>
                    <button aria-label="Scroll right"><svg class="ar"><use href="#i-right"/></svg></button>
                </div>
            </div>
        </section>

        <aside class="props">
            <header class="phead">Properties<button aria-label="Close properties"><svg class="x"><use href="#i-close"/></svg></button></header>
            <button class="type">
                <span class="thumb"><svg viewBox="0 0 34 28"><path d="M2 2h22l8 8v16H2z" fill="#eef1f4" stroke="#333" stroke-width="2"/><path d="M24 2v8h8" fill="#fff" stroke="#333" stroke-width="2"/><path d="M6 22V7h15v11h-6v4zM10 22v-6h5M10 11h7v7M28 14v8" fill="none" stroke="#7b8896" stroke-width="2"/></svg></span>
                Sheet
                <svg class="tcar"><use href="#i-caret"/></svg>
            </button>
            <div class="filter">
                <select aria-label="Element filter"><option>Sheet: Electrical Layo</option></select>
                <button class="edittype"><svg class="line" viewBox="0 0 16 16"><path d="M1 4l2-2h4v5H1zM9 4l2-2h4v5M1 10h5v5H1z" fill="#fff"/><path d="M8 7h7v8H8z" fill="#fff"/><path d="M8 8.500h7" stroke="#3565a8" stroke-width="2"/><path d="M10 11h3M10 13h3"/></svg>Edit Type</button>
            </div>
            <div class="ptable">
                <table>
                    <colgroup><col class="c-name"><col class="c-value"><col class="c-link"></colgroup>
                    <tr class="grp"><th colspan="3">Graphics<svg><use href="#i-fold"/></svg></th></tr>
                    <tr><td>Visibility/Graph...</td><td class="b"><button>Edit...</button></td><td></td></tr>
                    <tr class="ro"><td>Scale</td><td>As indicated</td><td></td></tr>
                    <tr class="grp"><th colspan="3">Identity Data<svg><use href="#i-fold"/></svg></th></tr>
                    <tr class="ro"><td>Dependency</td><td>Independent</td><td></td></tr>
                    <tr class="ro"><td>Referencing Sh...</td><td></td><td></td></tr>
                    <tr class="ro"><td>Referencing De...</td><td></td><td></td></tr>
                    <tr class="ro"><td><label for="rev">Current Revisio...</label></td><td><input type="checkbox" id="rev" disabled></td><td></td></tr>
                    <tr class="ro"><td>Current Revisio...</td><td></td><td></td></tr>
                    <tr class="ro"><td>Current Revisio...</td><td></td><td></td></tr>
                    <tr class="ro"><td>Current Revisio...</td><td></td><td></td></tr>
                    <tr class="ro"><td>Current Revisio...</td><td></td><td></td></tr>
                    <tr class="ro"><td>Current Revision</td><td></td><td></td></tr>
                    <tr><td>Approved By</td><td>Approver</td><td></td></tr>
                    <tr><td>Designed By</td><td>Designer</td><td></td></tr>
                    <tr><td>Checked By</td><td>Checker</td><td></td></tr>
                    <tr><td>Drawn By</td><td>Author</td><td></td></tr>
                    <tr><td>Sheet Number</td><td>10</td><td></td></tr>
                    <tr><td>Sheet Name</td><td>Electrical Layout x</td><td></td></tr>
                    <tr><td>Sheet Issue Date</td><td>08/25/22</td><td></td></tr>
                    <tr><td><label for="appears">Appears In She...</label></td><td><input type="checkbox" id="appears" checked></td><td></td></tr>
                    <tr><td>Revisions on Sh...</td><td class="b"><button>Edit...</button></td><td></td></tr>
                    <tr class="grp"><th colspan="3">Other<svg><use href="#i-fold"/></svg></th></tr>
                    <tr class="ro"><td>File Path</td><td>C:\Users\MSNH...</td><td></td></tr>
                    <tr><td>Guide Grid</td><td>&lt;None&gt;</td><td></td></tr>
                </table>
            </div>
            <footer class="pfoot"><a href="#">Properties help</a><button disabled>Apply</button></footer>
        </aside>
    </main>

    <footer class="status">
        <span class="hint">Click to select, TAB for alternates, CTRL adds, SHIFT unselects.</span>
        <div class="worksets">
            <svg class="line" viewBox="0 0 16 16"><path d="M2 6l5-2 4 2v7l-4 2-5-2z" fill="#fff"/><path d="M9 1h5v5H9z" fill="#7cc4d8"/><path d="M7 8v7" stroke="#2a8fa8" stroke-width="2"/></svg>
            <select aria-label="Active workset"><option></option></select>
            <svg class="line soft" viewBox="0 0 16 16"><path d="M3 2h10l-4 5v6H6V7z" fill="#ddd"/></svg>
            <span>:0</span>
        </div>
        <div class="design">
            <svg class="line" viewBox="0 0 16 16"><path d="M1 2h14v12H1z" fill="#fff"/><path d="M1 4h14" stroke-width="2"/><path d="M4 8h2M8 8h5M4 11h2M8 11h5"/></svg>
            <svg class="line soft" viewBox="0 0 16 16"><path d="M2 3h12v10H2z" fill="#bbb"/><path d="M4 9l6-4v8z" fill="#eee"/></svg>
            <select aria-label="Design option"><option>Main Model</option></select>
        </div>
        <div class="toggles">
            <svg class="line" viewBox="0 0 16 16"><path d="M1 3l10 3-6 3z" fill="#f3bd3a"/><path d="M6 8l1 5 2-3 4 5"/></svg>
            <svg class="line" viewBox="0 0 16 16"><path d="M2 13L12 3M3 9l8 5"/><path d="M9 9l5 5M14 9l-5 5" stroke="#d8202a" stroke-width="2"/></svg>
            <svg class="line" viewBox="0 0 16 16"><path d="M4 2h5v5l3 2H2l2-2z" fill="#f5a35c"/><path d="M6 9v5M9 10l5 5"/></svg>
            <svg class="line" viewBox="0 0 16 16"><path d="M2 3h9v9H2z" stroke="#2a8fa8"/><path d="M8 8l6 6M14 2L7 14" stroke="#d8202a" stroke-width="2"/></svg>
            <svg class="line" viewBox="0 0 16 16"><path d="M8 1v14M1 8h14M6 3l2-2 2 2M6 13l2 2 2-2"/><path d="M9 9l5 5"/></svg>
            <svg class="line soft" viewBox="0 0 16 16"><circle cx="8" cy="8" r="5" fill="#ccc"/><circle cx="8" cy="8" r="2"/></svg>
            <svg class="line" viewBox="0 0 16 16"><path d="M1 2h13L9 8v6l-3-2V8z" fill="#e8eef5"/></svg>
            <span>:0</span>
        </div>
    </footer>

    <footer class="taskbar">
        <button class="task" aria-label="Start"><svg viewBox="0 0 16 16"><path d="M0 2l7-1v7H0zM8 1l8-1v8H8zM0 9h7v6l-7-1zM8 9h8v7l-8-1z" fill="#fff"/></svg></button>
        <button class="task" aria-label="Search"><svg class="wl" viewBox="0 0 16 16"><circle cx="10" cy="6" r="5"/><path d="M6 10l-6 6"/></svg></button>
        <button class="task" aria-label="Task view"><svg class="wl" viewBox="0 0 16 16"><path d="M0 4h10v8H0zM0 0v2h10V0M0 16v-2h10v2M14 0v16M13 6h3"/></svg></button>
        <button class="task run" aria-label="Edge"><svg class="c" viewBox="0 0 24 24"><circle cx="12" cy="12" r="12" fill="#1374c4"/><path d="M1 8C4-2 24-2 24 10c0 6-9 7-10 4 3-3-1-7-6-6-3 0-6 1-7 0z" fill="#46c98b"/><path d="M1 9c6-4 10 0 8 4-1 6 6 9 12 6-6 8-22 5-20-10z" fill="#1b8fd8"/></svg></button>
        <button class="task run" aria-label="File Explorer"><svg class="c" viewBox="0 0 24 24"><path d="M1 3h9l2 3h11v15H1z" fill="#f0b93a"/><path d="M1 8h22v12H1z" fill="#fbd768"/><path d="M5 13h14v9h-4v-5H9v5H5z" fill="#3b93d6"/></svg></button>
        <button class="task" aria-label="Snipping tool"><svg class="c" viewBox="0 0 24 24"><ellipse cx="11" cy="8" rx="10" ry="6" fill="#eee" stroke="#c9434a" stroke-width="2"/><path d="M7 4l9 9M13 13l-3-6" stroke="#888"/><path d="M14 14l8 4M17 14v8" stroke="#2b7bc0" stroke-width="3"/></svg></button>
        <button class="task" aria-label="Stylus"><svg class="c" viewBox="0 0 24 24"><path d="M0 0h24v24H0z" fill="#5a0a78"/><circle cx="13" cy="6" r="2" fill="#fff"/><path d="M4 12q8 4 13-4M4 17q10 3 16-4M6 21q8 1 13-3" fill="none" stroke="#fff" stroke-width="1"/></svg></button>
        <button class="task run" aria-label="PDF reader"><svg class="c" viewBox="0 0 24 24"><path d="M2 1h20v22H2z" fill="#dfeaf3"/><path d="M3 1h3v14H3z" fill="#f2c230"/><path d="M6 1h3v10H6z" fill="#d14fa0"/><path d="M4 12q8-8 16 0-8 5-16 0z" fill="#3b8fc4"/><path d="M10 16h13v7H10z" fill="#e2382e"/><text x="11" y="22" font-size="6" fill="#fff">PDF</text></svg></button>
        <button class="task run" aria-label="Skype"><svg class="c" viewBox="0 0 24 24"><circle cx="12" cy="12" r="10" fill="#0ba4e8"/><circle cx="7" cy="7" r="6" fill="#0ba4e8"/><circle cx="17" cy="17" r="6" fill="#0b8fdc"/><text x="7" y="18" font-size="16" font-weight="700" fill="#fff">S</text></svg></button>
        <button class="task run focus" aria-label="Revit"><svg class="c" viewBox="0 0 24 24"><path d="M0 0h24v24H0z" fill="#e9eff5"/><path d="M6 3h7c8 0 8 8 3 9l4 9h-5l-3-8h-1v8H6zM11 6v4h2c3 0 3-4 0-4z" fill="#2a6db5" fill-rule="evenodd"/></svg></button>
        <div class="tray">
            <svg class="wl" viewBox="0 0 16 16"><path d="M3 10l5-5 5 5"/></svg>
            <svg class="wl" viewBox="0 0 16 16"><path d="M4 5h8v9H4zM6 5V2h4v3M8 8v3"/></svg>
            <svg class="wl" viewBox="0 0 16 16"><path d="M1 10q0-4 4-4 3-5 7-1 4 1 3 6z" fill="#ddd"/><circle cx="11" cy="11" r="4" fill="#d8202a" stroke="none"/><path d="M9 9l4 4M13 9l-4 4"/></svg>
            <svg class="wl" viewBox="0 0 16 16"><path d="M3 3h12v8H3zM1 6v8h6M7 14h6"/></svg>
            <svg class="wl" viewBox="0 0 16 16"><path d="M1 6h3l4-4v12l-4-4H1zM10 5q2 3 0 6M12 3q4 5 0 10"/></svg>
            <svg viewBox="0 0 16 16"><path d="M4 1l4 3-4 3-4-3zM12 1l4 3-4 3-4-3zM4 7l4 3-4 3-4-3zM12 7l4 3-4 3-4-3z" fill="#fff"/><circle cx="12" cy="11" r="4" fill="#d8202a"/></svg>
            <svg class="wl" viewBox="0 0 16 16"><path d="M1 13q4 3 6-2L13 2l2 1-6 9q-3 3-6-1"/></svg>
            <span class="lang">ENG</span>
            <span class="clock">2:05 PM<br>9/27/2022</span>
            <svg class="wl" viewBox="0 0 16 16"><path d="M1 2h14v10h-5l-2 3v-3H1z"/></svg>
        </div>
    </footer>
</body>
</html>
```
FILE: styles.css
```css
* {
    box-sizing: border-box;
}
body {
    margin: 0;
    height: 100vh;
    display: flex;
    flex-direction: column;
    overflow: hidden;
    background: #eee;
    color: #222;
    font-family: "Noto Sans", "Open Sans", sans-serif;
    font-size: 11px;
    line-height: 15px;
}
button, select, input {
    font: inherit;
    color: inherit;
}
button {
    margin: 0;
    padding: 0;
    border: 0;
    background: none;
}
ul {
    margin: 0;
    padding: 0;
    list-style: none;
}
select {
    appearance: none;
    padding: 0 16px 0 3px;
    border: 1px solid #adadad;
    border-radius: 0;
    background: #e2e2e2 url("data:image/svg+xml,%3Csvg xmlns='http://www.w3.org/2000/svg' width='8' height='6'%3E%3Cpath d='M1 1l3 3 3-3' fill='none' stroke='%23555'/%3E%3C/svg%3E") right 4px center no-repeat;
}
.defs {
    position: absolute;
}
.line {
    fill: none;
    stroke: #333b46;
}
.line.soft {
    stroke: #999;
}

/* title bar */
.titlebar {
    flex: none;
    height: 29px;
    display: flex;
    align-items: flex-start;
    background: #cbcbcb;
}
.qat {
    flex: 1;
    display: flex;
    align-items: center;
    height: 24px;
}
.qbtn {
    width: 24px;
    height: 22px;
    display: flex;
    align-items: center;
    justify-content: center;
}
.qbtn svg {
    width: 18px;
    height: 18px;
}
.qon {
    border: 1px solid #1d5fae;
    background: #b5d7f3;
}
.qtext {
    font-size: 18px;
    font-weight: 700;
    color: #333;
}
.qarr {
    width: 12px;
    display: flex;
    justify-content: center;
}
.qarr svg {
    width: 5px;
    height: 3px;
    fill: #333;
}
.qarr.more {
    width: 18px;
}
.more svg {
    width: 8px;
    height: 8px;
    padding-top: 2px;
    border-top: 1px solid #333;
    fill: #333;
}
.qsep {
    width: 1px;
    height: 22px;
    margin: 0 3px 0 2px;
    background: #bbb;
}
.gap5 {
    width: 5px;
}
.gap7 {
    width: 7px;
}
.title {
    margin: 0;
    padding: 2px 5px 0 0;
    font-size: 11px;
    font-weight: 400;
}
.account {
    flex: none;
    width: 37%;
    height: 25px;
    display: flex;
    align-items: center;
    justify-content: flex-end;
    gap: 7px;
    padding-right: 6px;
}
.tri {
    width: 4px;
    height: 7px;
}
.a16 {
    width: 18px;
    height: 20px;
}
.user {
    display: flex;
    align-items: center;
}
.user svg {
    width: 5px;
    height: 3px;
}
.cart {
    margin: 0 10px 0 2px;
}
.help {
    width: 17px;
    height: 17px;
    border: 1px solid #28406f;
    border-radius: 50%;
    background: #fff;
    color: #1d4aa0;
    font-weight: 700;
}
.winbtns {
    display: flex;
    gap: 13px;
    margin-left: 48px;
}
.win {
    width: 12px;
    height: 12px;
}
.winbtns .win {
    display: block;
    fill: none;
    stroke: #222;
    stroke-width: 2;
}

/* ribbon tabs */
.tabs {
    flex: none;
    height: 20px;
    display: flex;
    background: #cbcbcb;
}
.file {
    width: 45px;
    margin-right: 3px;
    background: #2a7ab5;
    color: #fff;
}
.tab {
    padding: 0 11px 1px 10px;
}
.tab.active {
    background: #eee;
}
.collapse {
    padding-left: 18px;
}
.collapse svg {
    width: 24px;
    height: 12px;
    display: block;
}

/* ribbon */
.ribbon {
    flex: none;
    height: 96px;
    display: flex;
    border-bottom: 1px solid #c8c8c8;
}
.panel {
    display: flex;
    flex-direction: column;
    border-right: 1px solid #dcdcdc;
}
.panel h2 {
    margin: 0;
    height: 18px;
    font-size: 11px;
    font-weight: 400;
    text-align: center;
}
.panel h2 svg {
    width: 8px;
    height: 5px;
    margin: 0 0 1px 3px;
    fill: #333;
}
.tools {
    flex: 1;
    display: grid;
    padding-left: 3px;
}
.p-select { width: 57px; }
.p-select .tools { grid-template-columns: 44px; padding: 3px 0 0 7px; }
.p-build { width: 568px; }
.p-build .tools { grid-template-columns: 42px 42px 48px 88px 62px 52px 39px 52px 45px 46px 45px; }
.p-circ { width: 139px; }
.p-circ .tools { grid-template-columns: 52px 42px 34px; padding-left: 6px; }
.p-model { width: 138px; }
.p-model .tools { grid-template-columns: 40px 40px 54px; padding-left: 4px; }
.p-room { width: 301px; }
.p-room .tools { grid-template-columns: 44px 51px 58px 40px 59px 46px; padding-left: 1px; }
.p-open { width: 210px; }
.p-open .tools { grid-template-columns: 36px 38px 40px 43px 48px; padding-left: 3px; }
.p-datum { width: 82px; }
.p-datum .tools { grid-template-columns: 38px 40px; }
.p-work { width: 160px; border: 0; }
.p-work .tools { grid-template-columns: 40px 38px 38px 40px; }
.tool {
    position: relative;
    display: flex;
    flex-direction: column;
    align-items: center;
    padding-top: 5px;
    color: #a3a3a3;
}
.tool svg {
    flex: none;
    width: 30px;
    height: 32px;
    margin-bottom: 3px;
    fill: #e6e6e6;
    stroke: #b4b4b4;
}
.tool.on {
    padding-top: 1px;
    height: 72px;
    border: 1px solid #1d5fae;
    background: linear-gradient(#cfe3f6, #a9d0f2);
    color: #222;
}
.tool.live {
    color: #222;
}
.tool.live svg {
    stroke: #333;
}
.tool i {
    margin-top: 2px;
    border: 3px solid transparent;
    border-top-color: #555;
    border-bottom: 0;
}
.tool .side {
    position: absolute;
    right: 2px;
    bottom: 18px;
}
.options {
    flex: none;
    height: 26px;
}

/* work area */
.work {
    flex: 1;
    min-height: 0;
    display: flex;
    border-top: 2px solid #cbcbcb;
}
.phead {
    flex: none;
    height: 20px;
    display: flex;
    align-items: center;
    justify-content: space-between;
    padding: 0 4px 0 3px;
    color: #333;
}
.phead button {
    display: flex;
}
.x {
    width: 10px;
    height: 10px;
    fill: none;
    stroke: #222;
    stroke-width: 2;
}
.browser {
    flex: none;
    width: 308px;
    display: flex;
    flex-direction: column;
    padding-bottom: 2px;
    border-right: 3px solid #cbcbcb;
}
.bbody {
    flex: 1;
    min-height: 0;
    display: flex;
    background: #fff;
}
.tree {
    flex: 1;
    overflow: hidden;
    white-space: nowrap;
    line-height: 18px;
    color: #000;
    background: repeating-linear-gradient(#999 0 1px, transparent 1px 3px) 9px 0 / 1px 786px no-repeat;
}
.leaves {
    margin-left: 29px;
    background: repeating-linear-gradient(#999 0 1px, transparent 1px 3px) 0 0 / 1px calc(100% - 8px) no-repeat;
}
.leaves li {
    height: 18px;
    display: flex;
    align-items: center;
}
.leaves li::before {
    content: "";
    width: 15px;
    margin-right: 3px;
    border-top: 1px dotted #999;
}
.sheets {
    margin-left: 25px;
    background-position: 4px 0;
}
.sheets li::before {
    width: 10px;
}
.sheets .exp {
    order: -1;
}
.sheets li b {
    margin-left: -3px;
    padding: 0 3px;
    background: #e2e2e2;
}
.root {
    height: 18px;
    display: flex;
    align-items: center;
    padding-left: 5px;
}
.exp {
    width: 9px;
    height: 9px;
    display: flex;
    align-items: center;
    justify-content: center;
    border: 1px solid #919191;
    background: #fff;
    color: #24408c;
    font-size: 9px;
    line-height: 7px;
}
.noexp {
    width: 9px;
}
.ti {
    width: 16px;
    height: 14px;
    margin: 0 6px 0 7px;
    fill: none;
    stroke: #444f5c;
}
.vbar {
    flex: none;
    width: 15px;
    display: flex;
    flex-direction: column;
    background: #f0f0f0;
}
.vbar button, .hbar button {
    flex: none;
    width: 15px;
    height: 15px;
    display: flex;
    align-items: center;
    justify-content: center;
}
.browser .vbar {
    margin-right: 1px;
}
.ar {
    width: 9px;
    height: 9px;
    fill: none;
    stroke: #444;
    stroke-width: 2;
}
.vthumb, .hthumb {
    background: #cdcdcd;
}
.vthumb.b {
    height: 405px;
    margin: auto 0 0;
}
.vthumb.v {
    height: 16px;
    margin-top: 380px;
    margin-bottom: auto;
}
.hbar {
    flex: none;
    height: 15px;
    display: flex;
    background: #f0f0f0;
}
.browser .hbar {
    padding: 0 16px 0 2px;
}
.hthumb.b {
    width: 196px;
    margin-right: auto;
}

/* drawing view */
.view {
    flex: 1;
    min-width: 0;
    display: flex;
    flex-direction: column;
    background: #fff;
}
.vtabs {
    flex: none;
    height: 20px;
    display: flex;
    background: #cbcbcb;
}
.vtab {
    display: flex;
    align-items: center;
    padding: 0 26px 0 5px;
    color: #444;
    white-space: nowrap;
}
.vtab svg {
    width: 16px;
    height: 14px;
    margin-right: 8px;
    fill: none;
    stroke: #8b939c;
}
.vtab.current {
    padding: 0 5px 0 6px;
    background: #fff;
    color: #222;
    font-weight: 700;
}
.vtab.current svg {
    stroke: #444f5c;
}
.vtab.current .x {
    width: 10px;
    height: 10px;
    margin: 0 0 0 8px;
    stroke: #222;
}
.vmenu {
    margin-left: auto;
    width: 24px;
}
.vbody {
    flex: 1;
    min-height: 0;
    display: flex;
}
.canvas {
    position: relative;
    flex: 1;
    min-width: 0;
}
.sheet {
    display: block;
    width: 100%;
    height: 100%;
}
.ln, .li {
    fill: none;
    stroke: #000;
}
.ln {
    shape-rendering: crispEdges;
}
.plan {
    fill: none;
    stroke-width: 3;
    overflow: visible;
}
.w, .win, .sym {
    stroke: #000;
}
.sheet .win {
    fill: #fff;
}
.plan .k {
    stroke-width: 6;
}
.sym .fill {
    fill: #000;
}
.eave {
    stroke: #777;
    stroke-dasharray: 9 6;
}
.eave.dark {
    stroke: #111;
}
.hatch {
    stroke: #ddd;
    stroke-width: 8;
}
.wire {
    stroke: #d2232a;
    stroke-dasharray: 7 7;
}
.wire .red {
    stroke-dasharray: 14 3;
}
.blue {
    stroke: #2222c8;
    stroke-dasharray: 30 15;
    shape-rendering: crispEdges;
}
.t {
    font-family: "Liberation Sans", Arial, sans-serif;
    font-size: 7px;
    fill: #222;
}
.h {
    font-size: 9px;
    font-weight: 700;
    text-decoration: underline;
    fill: #000;
}
.big {
    font-size: 12px;
}
.stamp {
    font-size: 9px;
    fill: #000;
}
.s {
    font-size: 6px;
}
.xs {
    font-size: 5px;
    fill: #555;
}
.ra {
    fill: #d2232a;
}
.mid {
    text-anchor: middle;
}
.end {
    text-anchor: end;
}
.brand {
    font-family: Lato, sans-serif;
    font-size: 29px;
    fill: #231f20;
}
.url {
    font-size: 11px;
    fill: #000;
}
.rev {
    font-weight: 700;
    fill: #000;
}
.proj {
    font-size: 11px;
    font-weight: 700;
    fill: #000;
}
.name {
    font-size: 18px;
    fill: #000;
}
.navbar {
    position: absolute;
    top: 3px;
    right: 1px;
    width: 35px;
    height: 117px;
    display: flex;
    flex-direction: column;
    align-items: center;
    border: 2px solid #cfcfcf;
    border-radius: 5px;
    background: #f3f3f3;
}
.navbar button {
    position: relative;
}
.navbar .dot {
    width: 8px;
    height: 8px;
    margin: 1px 2px 11px;
    align-self: flex-end;
    border: 2px solid #c4c4c4;
    border-radius: 50%;
}
.navbar .dot.end {
    margin: auto 2px 1px;
}
.wheel {
    display: block;
    width: 26px;
    height: 22px;
}
.navbar b {
    position: absolute;
    right: 0;
    bottom: -2px;
    font-size: 8px;
    line-height: 8px;
    color: #5b86c4;
}
.ncar {
    width: 5px;
    height: 3px;
    margin: 7px 0 2px;
    fill: #999;
}
.navbar hr {
    width: 26px;
    margin: 2px 0 6px;
    border: 0;
    border-top: 1px solid #ccc;
}
.zoomr {
    display: block;
    width: 17px;
    height: 17px;
}
.view .vbar {
    margin-right: 4px;
}
.vfoot {
    flex: none;
    height: 18px;
    display: flex;
    align-items: center;
    background: #eee;
}
.vfoot > button {
    width: 21px;
    display: flex;
    justify-content: center;
}
.vfoot > button svg {
    width: 16px;
    height: 12px;
}
.bulb {
    fill: #cfe2f8;
    stroke: #2c62b8;
}
.vfoot .hbar {
    flex: 1;
    margin-right: 22px;
    padding-left: 2px;
}
.hthumb.v {
    width: 16px;
    margin: auto;
    height: 15px;
}

/* properties */
.props {
    flex: none;
    width: 219px;
    display: flex;
    flex-direction: column;
    border-left: 2px solid #cbcbcb;
    padding-left: 2px;
}
.type {
    flex: none;
    height: 72px;
    display: flex;
    align-items: center;
    gap: 5px;
    padding: 2px;
    border-top: 1px solid #d4d4d4;
    border-bottom: 1px solid #d4d4d4;
    color: #333;
}
.thumb {
    width: 66px;
    height: 65px;
    display: flex;
    align-items: center;
    justify-content: center;
    border: 1px solid #cfcfcf;
}
.thumb svg {
    width: 34px;
    height: 28px;
}
.tcar {
    width: 8px;
    height: 4px;
    margin-left: auto;
    fill: #222;
}
.filter {
    flex: none;
    height: 24px;
    display: flex;
    align-items: center;
}
.filter select {
    width: 134px;
    height: 22px;
}
.edittype {
    flex: 1;
    display: flex;
    align-items: center;
    justify-content: center;
    gap: 5px;
}
.edittype svg {
    width: 16px;
    height: 16px;
}
.ptable {
    flex: 1;
    background: #fff;
}
.ptable table {
    width: 100%;
    table-layout: fixed;
    border-collapse: collapse;
    white-space: nowrap;
    line-height: 15px;
    color: #000;
}
.c-name {
    width: 101px;
}
.c-value {
    width: 102px;
}
.ptable tr {
    height: 18px;
}
.ptable td {
    padding: 0 0 0 2px;
    overflow: hidden;
    border: 1px dotted #777;
    border-left: 0;
}
.ptable td:first-child {
    padding-left: 8px;
}
.grp th {
    padding: 0 6px 0 2px;
    background: #dadada;
    font-weight: 400;
    text-align: left;
}
.grp svg {
    float: right;
    width: 8px;
    height: 10px;
    margin-top: 2px;
    fill: none;
    stroke: #222;
}
.ro {
    color: #7a7a7a;
}
.ptable .b {
    padding: 0 1px;
}
.ptable .b button {
    display: block;
    width: 100%;
    height: 15px;
    border: 1px solid #b0b0b0;
    background: #e1e1e1;
    line-height: 12px;
}
.ptable input {
    display: block;
    appearance: none;
    width: 13px;
    height: 13px;
    margin: 0;
    border: 1px solid #333;
    background: #fff;
}
.ptable input:disabled {
    border-color: #ccc;
}
.ptable input:checked::before {
    content: "";
    display: block;
    width: 8px;
    height: 4px;
    margin: 2px 1px;
    border: solid #222;
    border-width: 0 0 1px 1px;
    transform: rotate(-45deg);
}
.pfoot {
    flex: none;
    height: 31px;
    display: flex;
    align-items: center;
    justify-content: space-between;
    padding: 0 0 1px 2px;
    border-top: 1px solid #d4d4d4;
}
.pfoot a {
    color: #0a62c4;
}
.pfoot button {
    width: 73px;
    height: 22px;
    border: 1px solid #bfbfbf;
    background: #ccc;
    color: #8a8a8a;
}

/* status bar */
.status {
    flex: none;
    height: 24px;
    display: grid;
    grid-template-columns: 895px 290px 1fr auto;
    align-items: center;
    padding: 0 70px 0 1px;
    background: #cbcbcb;
}
.status > div {
    display: flex;
    align-items: center;
    gap: 8px;
}
.status svg {
    width: 16px;
    height: 16px;
}
.status select {
    width: 204px;
    height: 18px;
    border-color: #bbb;
    background-color: #ddd;
    color: #777;
}
.status > .toggles {
    gap: 10px;
}
.toggles span {
    margin-left: -10px;
}

/* taskbar */
.taskbar {
    flex: none;
    height: 40px;
    display: flex;
    background: #3b3c3e;
    color: #fff;
}
.task {
    width: 49px;
    display: flex;
    align-items: center;
    justify-content: center;
}
.task svg {
    width: 16px;
    height: 16px;
}
.task .c {
    width: 24px;
    height: 24px;
}
.task.run {
    border-bottom: 2px solid #76b9ed;
    border-left: 4px solid transparent;
    border-right: 4px solid transparent;
}
.task.focus {
    border-left: 0;
    border-right: 0;
    background: #6b6c6e;
}
.wl {
    fill: none;
    stroke: #fff;
}
.tray {
    flex: 1;
    display: flex;
    align-items: center;
    justify-content: flex-end;
    gap: 9px;
    padding-right: 24px;
}
.tray svg {
    width: 16px;
    height: 16px;
}
.lang {
    margin-left: 4px;
}
.clock {
    margin: 0 8px 0 4px;
    line-height: 18px;
    text-align: center;
}
```
